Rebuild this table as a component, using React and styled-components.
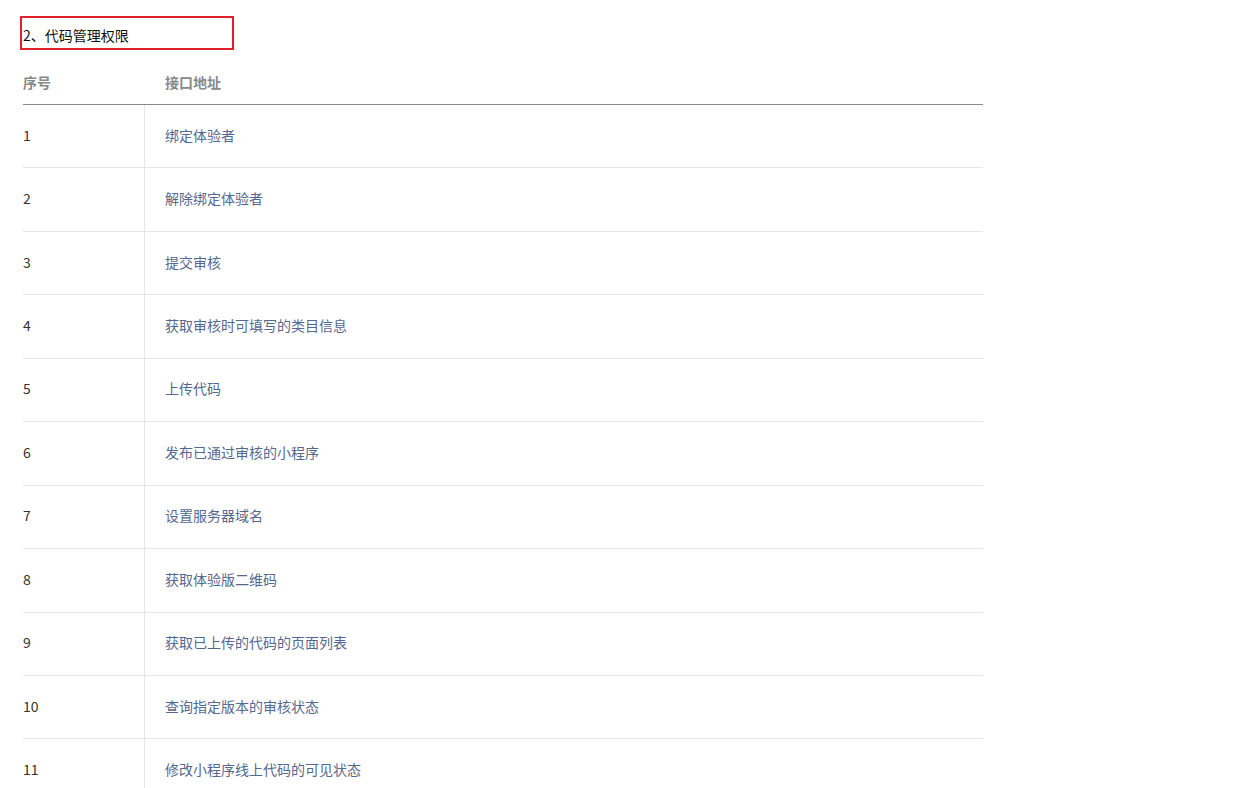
import React from "react";
import styled, { createGlobalStyle } from "styled-components";

const GlobalStyle = createGlobalStyle`
  body {
    margin: 0;
    background: #fff;
    font-family: "Microsoft YaHei", "Noto Sans CJK SC", "Liberation Sans", sans-serif;
    font-size: 14px;
  }
`;

const Page = styled.div`
  padding: 16px 0 0 20px;
`;

const Caption = styled.div`
  width: 209px;
  height: 27px;
  padding: 3px 0 0 1px;
  border: 2px solid #e0202a;
  display: flex;
  align-items: center;
  color: #111;
  font-size: 14px;
`;

const Table = styled.div`
  width: 960px;
  margin: 12px 0 0 3px;
`;

const HeadRow = styled.div`
  display: grid;
  grid-template-columns: 121px 1fr;
  height: 40px;
  padding-bottom: 2px;
  align-items: center;
  border-bottom: 1px solid #888;
`;

const HeadCell = styled.div`
  color: #888;
  font-weight: bold;
  padding-left: ${(p) => (p.$first ? "0" : "21px")};
`;

const Row = styled.div`
  display: grid;
  grid-template-columns: 121px 1fr;
  height: 62.44px;
  border-bottom: 1px solid #e6e6e6;
`;

const Cell = styled.div`
  display: flex;
  align-items: center;
  padding: 0 0 3px ${(p) => (p.$first ? "0" : "20px")};
  border-left: ${(p) => (p.$first ? "none" : "1px solid #e6e6e6")};
  color: ${(p) => (p.$first ? "#333" : "#56688e")};
  font-size: 14px;
`;

const rows = [
  "绑定体验者",
  "解除绑定体验者",
  "提交审核",
  "获取审核时可填写的类目信息",
  "上传代码",
  "发布已通过审核的小程序",
  "设置服务器域名",
  "获取体验版二维码",
  "获取已上传的代码的页面列表",
  "查询指定版本的审核状态",
  "修改小程序线上代码的可见状态",
];

export default function App() {
  return (
    <>
      <GlobalStyle />
      <Page>
        <Caption>2、代码管理权限</Caption>
        <Table>
          <HeadRow>
            <HeadCell $first>序号</HeadCell>
            <HeadCell>接口地址</HeadCell>
          </HeadRow>
          {rows.map((name, i) => (
            <Row key={name}>
              <Cell $first>{i + 1}</Cell>
              <Cell>{name}</Cell>
            </Row>
          ))}
        </Table>
      </Page>
    </>
  );
}
